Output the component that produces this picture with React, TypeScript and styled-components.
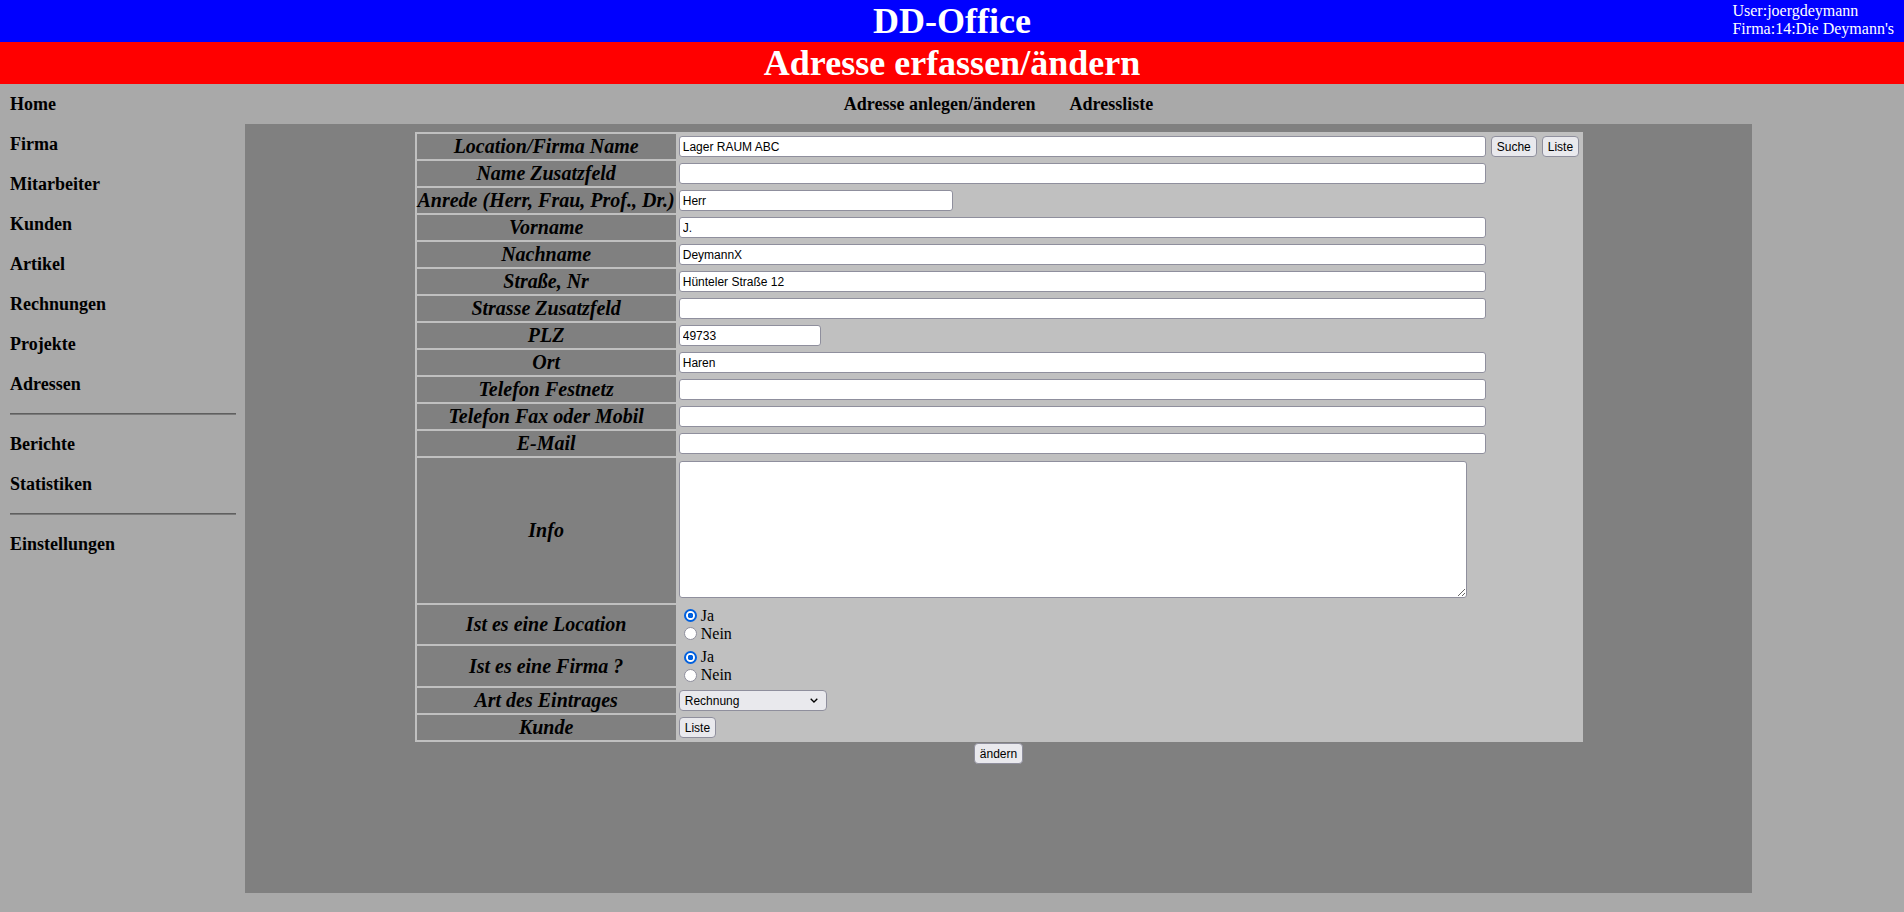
import React from "react";
import styled, { createGlobalStyle } from "styled-components";

const GlobalStyle = createGlobalStyle`
  html, body { margin: 0; padding: 0; }
  body {
    background: #a9a9a9;
    font-family: "Liberation Serif", "Times New Roman", serif;
    color: #000;
  }
`;

const Page = styled.div`
  width: 1904px;
  min-height: 912px;
  background: #a9a9a9;
`;

const TopBar = styled.header`
  display: grid;
  grid-template-columns: 1fr auto 1fr;
  height: 42px;
  background: #0000ff;
  color: #fff;
`;

const BrandTitle = styled.div`
  grid-column: 2;
  font-size: 36px;
  font-weight: bold;
  line-height: 42px;
`;

const UserInfo = styled.div`
  grid-column: 3;
  justify-self: end;
  padding: 2px 10px 0 0;
  font-size: 16px;
  line-height: 18px;
`;

const PageTitle = styled.h1`
  margin: 0;
  height: 42px;
  background: #ff0000;
  color: #fff;
  text-align: center;
  font-size: 36px;
  font-weight: bold;
  line-height: 42px;
`;

const Body = styled.div`
  display: grid;
  grid-template-columns: 245px 1507px 1fr;
`;

const Sidebar = styled.nav`
  display: flex;
  flex-direction: column;
  padding: 0 9px 0 10px;
`;

const SideLink = styled.a`
  display: block;
  height: 40px;
  line-height: 40px;
  font-size: 18px;
  font-weight: bold;
  color: #000;
  text-decoration: none;
`;

const SideRule = styled.hr`
  margin: 9px 0;
  height: 0;
  border: none;
  border-top: 1px solid #5f5f5f;
  border-bottom: 1px solid #7a7a7a;
`;

const Main = styled.main`
  display: flex;
  flex-direction: column;
`;

const SubNav = styled.div`
  display: flex;
  justify-content: center;
  gap: 34px;
  height: 40px;
  line-height: 40px;
`;

const SubLink = styled.a`
  font-size: 18px;
  font-weight: bold;
  color: #000;
  text-decoration: none;
`;

const Panel = styled.section`
  height: 769px;
  background: #808080;
  padding-top: 8px;
  box-sizing: border-box;
`;

const FormTable = styled.table`
  width: 1168px;
  margin: 0 auto;
  border-collapse: separate;
  border-spacing: 2px;
  background: #c0c0c0;
`;

const Label = styled.th<{ $h?: number }>`
  width: 257px;
  height: ${(p) => (p.$h ? p.$h - 2 : 23)}px;
  padding: 1px;
  background: #808080;
  font-size: 20px;
  font-style: italic;
  font-weight: bold;
  line-height: 23px;
  text-align: center;
  vertical-align: middle;
  white-space: nowrap;
`;

const Cell = styled.td`
  padding: 1px;
  vertical-align: middle;
`;

const Field = styled.div`
  display: flex;
  align-items: center;
  gap: 5px;
`;

const fieldFont = `"Liberation Sans", Arial, sans-serif`;

const TextInput = styled.input<{ $w: number }>`
  width: ${(p) => p.$w}px;
  height: 21px;
  box-sizing: border-box;
  margin: 0;
  padding: 0 3px;
  border: 1px solid #8f8f9d;
  border-radius: 3px;
  background: #fff;
  font-family: ${fieldFont};
  font-size: 12px;
  color: #000;
  outline: none;
`;

const TextArea = styled.textarea`
  display: block;
  width: 788px;
  height: 137px;
  box-sizing: border-box;
  margin: 2px 0 4px;
  padding: 2px 3px;
  border: 1px solid #8f8f9d;
  border-radius: 3px;
  background: #fff;
  font-family: ${fieldFont};
  font-size: 12px;
  outline: none;
`;

const Button = styled.button`
  height: 21px;
  box-sizing: border-box;
  margin: 0;
  padding: 0 5px;
  border: 1px solid #8f8f9d;
  border-radius: 4px;
  background: #e9e9ed;
  font-family: ${fieldFont};
  font-size: 12px;
  color: #000;
`;

const RadioGroup = styled.div`
  display: flex;
  flex-direction: column;
`;

const RadioOption = styled.label`
  display: flex;
  align-items: center;
  height: 18px;
  font-size: 16px;
  line-height: 18px;
`;

const Radio = styled.input`
  appearance: none;
  width: 13px;
  height: 13px;
  margin: 0 4px 0 5px;
  box-sizing: border-box;
  border: 1px solid #8f8f9d;
  border-radius: 50%;
  background: #fff;
  &:checked {
    border: 2px solid #0060df;
    background: radial-gradient(circle, #0060df 0 2.6px, #fff 3px);
  }
`;

const SelectWrap = styled.span`
  position: relative;
  display: inline-block;
`;

const Select = styled.select`
  appearance: none;
  width: 148px;
  height: 21px;
  box-sizing: border-box;
  margin: 0;
  padding: 0 20px 0 5px;
  border: 1px solid #8f8f9d;
  border-radius: 4px;
  background: #e9e9ed;
  font-family: ${fieldFont};
  font-size: 12px;
  color: #000;
`;

const Chevron = styled.svg`
  position: absolute;
  right: 9px;
  top: 8px;
  pointer-events: none;
`;

const SubmitRow = styled.div`
  display: flex;
  justify-content: center;
  padding-top: 1px;
`;

const navItems = ["Home", "Firma", "Mitarbeiter", "Kunden", "Artikel", "Rechnungen", "Projekte", "Adressen"];

const fields: { label: string; value?: string; w: number; buttons?: boolean }[] = [
  { label: "Location/Firma Name", value: "Lager RAUM ABC", w: 807, buttons: true },
  { label: "Name Zusatzfeld", w: 807 },
  { label: "Anrede (Herr, Frau, Prof., Dr.)", value: "Herr", w: 274 },
  { label: "Vorname", value: "J.", w: 807 },
  { label: "Nachname", value: "DeymannX", w: 807 },
  { label: "Straße, Nr", value: "Hünteler Straße 12", w: 807 },
  { label: "Strasse Zusatzfeld", w: 807 },
  { label: "PLZ", value: "49733", w: 142 },
  { label: "Ort", value: "Haren", w: 807 },
  { label: "Telefon Festnetz", w: 807 },
  { label: "Telefon Fax oder Mobil", w: 807 },
  { label: "E-Mail", w: 807 },
];

function YesNo({ name }: { name: string }) {
  return (
    <RadioGroup>
      <RadioOption>
        <Radio type="radio" name={name} defaultChecked />
        Ja
      </RadioOption>
      <RadioOption>
        <Radio type="radio" name={name} />
        Nein
      </RadioOption>
    </RadioGroup>
  );
}

export default function App() {
  return (
    <Page>
      <GlobalStyle />
      <TopBar>
        <BrandTitle>DD-Office</BrandTitle>
        <UserInfo>
          User:joergdeymann
          <br />
          Firma:14:Die Deymann's
        </UserInfo>
      </TopBar>
      <PageTitle>Adresse erfassen/ändern</PageTitle>
      <Body>
        <Sidebar>
          {navItems.map((n) => (
            <SideLink key={n} href="#">
              {n}
            </SideLink>
          ))}
          <SideRule />
          <SideLink href="#">Berichte</SideLink>
          <SideLink href="#">Statistiken</SideLink>
          <SideRule />
          <SideLink href="#">Einstellungen</SideLink>
        </Sidebar>
        <Main>
          <SubNav>
            <SubLink href="#">Adresse anlegen/änderen</SubLink>
            <SubLink href="#">Adressliste</SubLink>
          </SubNav>
          <Panel>
            <FormTable>
              <tbody>
                {fields.map((f) => (
                  <tr key={f.label}>
                    <Label>{f.label}</Label>
                    <Cell>
                      <Field>
                        <TextInput $w={f.w} type="text" defaultValue={f.value ?? ""} />
                        {f.buttons && (
                          <>
                            <Button type="button">Suche</Button>
                            <Button type="button">Liste</Button>
                          </>
                        )}
                      </Field>
                    </Cell>
                  </tr>
                ))}
                <tr>
                  <Label $h={145}>Info</Label>
                  <Cell>
                    <TextArea />
                  </Cell>
                </tr>
                <tr>
                  <Label $h={39}>Ist es eine Location</Label>
                  <Cell>
                    <YesNo name="location" />
                  </Cell>
                </tr>
                <tr>
                  <Label $h={40}>Ist es eine Firma ?</Label>
                  <Cell>
                    <YesNo name="firma" />
                  </Cell>
                </tr>
                <tr>
                  <Label>Art des Eintrages</Label>
                  <Cell>
                    <SelectWrap>
                      <Select defaultValue="Rechnung">
                        <option>Rechnung</option>
                        <option>Lieferung</option>
                        <option>Sonstiges</option>
                      </Select>
                      <Chevron width="8" height="5" viewBox="0 0 8 5">
                        <path d="M0.7 0.7 L4 4 L7.3 0.7" fill="none" stroke="#000" strokeWidth="1.3" />
                      </Chevron>
                    </SelectWrap>
                  </Cell>
                </tr>
                <tr>
                  <Label>Kunde</Label>
                  <Cell>
                    <Field>
                      <Button type="button">Liste</Button>
                    </Field>
                  </Cell>
                </tr>
              </tbody>
            </FormTable>
            <SubmitRow>
              <Button type="button">ändern</Button>
            </SubmitRow>
          </Panel>
        </Main>
        <div />
      </Body>
    </Page>
  );
}
